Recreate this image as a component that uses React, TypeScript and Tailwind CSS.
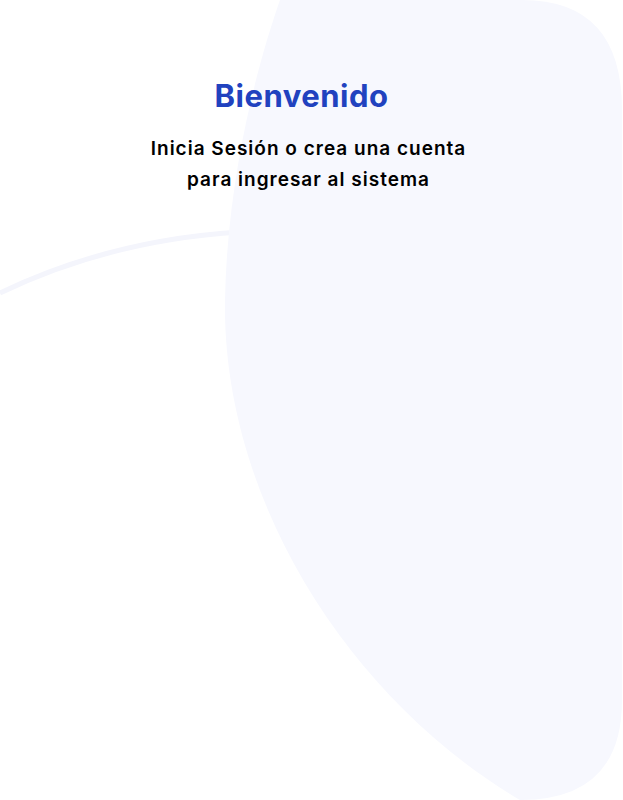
const Backdrop = () => (
  <svg
    className="absolute inset-0 h-full w-full"
    viewBox="0 0 623 800"
    preserveAspectRatio="none"
    aria-hidden="true"
  >
    <path d="M0 293 Q110 240 240 232" fill="none" stroke="#f4f5fc" strokeWidth="5" />
    <path
      d="M280 0 L522 0 Q622 0 622 110 L622 700 Q622 800 520 800 C350 700 222 500 225 300 C227 190 252 80 280 0 Z"
      fill="#f7f8fe"
    />
  </svg>
);

export default function App() {
  return (
    <div className="relative h-[800px] w-full overflow-hidden bg-white font-['Inter',sans-serif]">
      <Backdrop />
      <div className="relative flex flex-col items-center pt-[76px] pr-[6px]">
        <h1 className="mr-[14px] text-[31px] font-bold leading-[40px] tracking-[0.5px] text-[#2142bf]">
          Bienvenido
        </h1>
        <p className="mt-[17px] text-center text-[19px] font-semibold leading-[31px] tracking-[1px] text-black">
          Inicia Sesión o crea una cuenta
          <br />
          para ingresar al sistema
        </p>
      </div>
    </div>
  );
}
